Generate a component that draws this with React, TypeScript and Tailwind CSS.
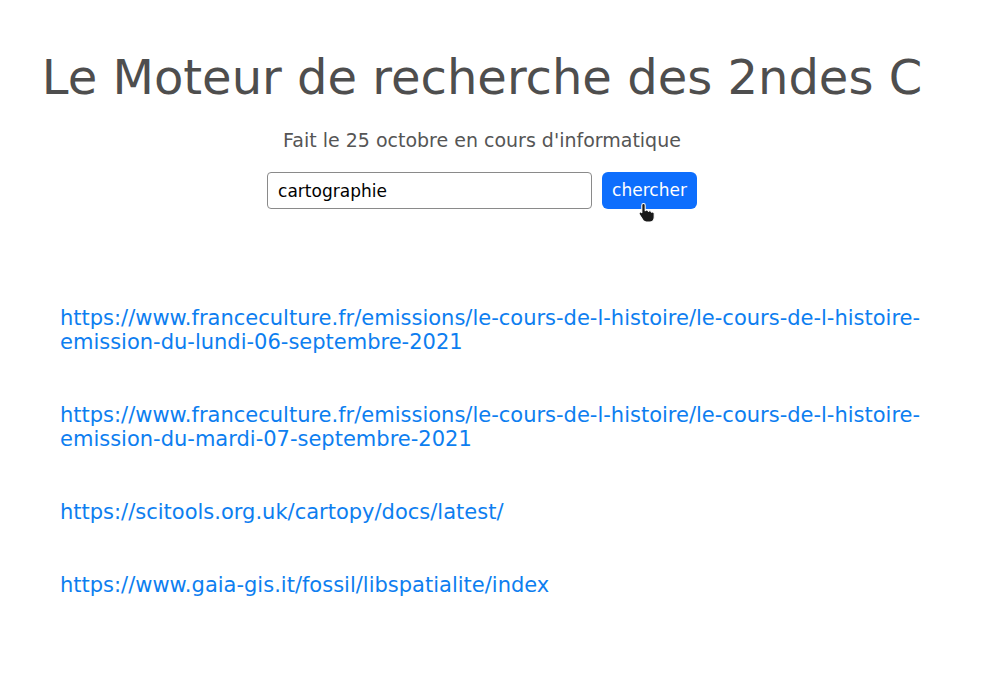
import React from 'react';

const LINKS = [
    'https://www.franceculture.fr/emissions/le-cours-de-l-histoire/le-cours-de-l-histoire-emission-du-lundi-06-septembre-2021',
    'https://www.franceculture.fr/emissions/le-cours-de-l-histoire/le-cours-de-l-histoire-emission-du-mardi-07-septembre-2021',
    'https://scitools.org.uk/cartopy/docs/latest/',
    'https://www.gaia-gis.it/fossil/libspatialite/index',
];

// mouse pointer sitting over the button in the screenshot
const HandCursor: React.FC = () => (
    <svg width="20" height="22" viewBox="0 0 20 22" className="absolute left-[35px] top-[30px]">
        <path
            d="M6.5 1.5c1 0 1.7.8 1.7 1.7v5.6c.3-.5.9-.8 1.5-.8.9 0 1.6.6 1.7 1.4.3-.4.8-.6 1.3-.6.9 0 1.6.7 1.7 1.5.3-.3.7-.4 1.100-.4 1 0 1.7.8 1.7 1.7v3.6c0 2.6-2 4.8-4.6 4.8H9.4c-1.3 0-2.5-.6-3.3-1.700L2.4 12.6c-.5-.7-.4-1.7.3-2.2.7-.5 1.6-.4 2.1.2V3.2c0-.9.8-1.7 1.7-1.7z"
            fill="#1a1a1a"
            stroke="#ffffff"
            strokeWidth="1.1"
            strokeLinejoin="round"
        />
    </svg>
);

const App: React.FC = () => {
    return (
        <div className="min-h-[680px] bg-white font-['DejaVu_Sans',sans-serif]">
            <div className="w-[964px]">
                <div className="pt-[46px] text-center">
                    <h1 className="text-[48px] leading-[62px] text-[#4e4e4e]">Le Moteur de recherche des 2ndes C</h1>
                    <p className="mt-[20px] text-[19px] leading-[24px] text-[#555]">Fait le 25 octobre en cours d'informatique</p>
                </div>

                {/* search bar */}
                <div className="mt-[20px] flex justify-center gap-[10px]">
                    <input
                        type="text"
                        defaultValue="cartographie"
                        className="w-[325px] h-[37px] rounded border border-[#8a8a8a] px-[10px] text-[17px] text-black outline-none"
                    />
                    <div className="relative">
                        <button
                            type="button"
                            className="h-[37px] px-[10px] rounded-md bg-[#0d6efd] text-[17px] text-white"
                        >
                            chercher
                        </button>
                        <HandCursor />
                    </div>
                </div>

                {/* results */}
                <div className="mt-[97px] pl-[60px] pr-[30px] flex flex-col gap-[49px]">
                    {LINKS.map(url => (
                        <a key={url} href="#" className="block text-[21px] leading-[24px] text-[#0d7ef0] break-words">
                            {url}
                        </a>
                    ))}
                </div>
            </div>
        </div>
    );
};

export default App;
